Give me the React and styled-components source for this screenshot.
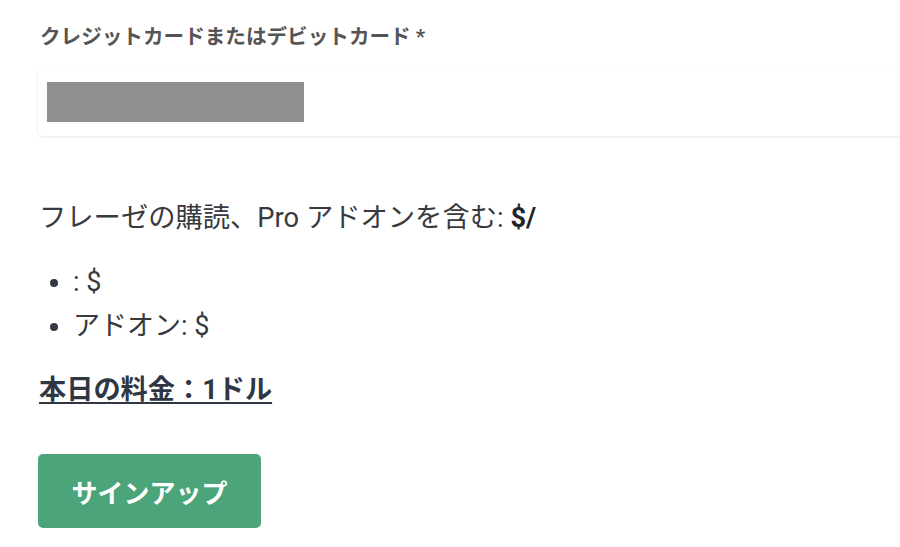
import styled, { createGlobalStyle } from "styled-components";

const GlobalStyle = createGlobalStyle`
  html, body {
    margin: 0;
    padding: 0;
    background: #ffffff;
  }
  body {
    font-family: Roboto, "Noto Sans CJK JP", sans-serif;
    color: #3a3a3a;
  }
`;

const Page = styled.div`
  padding: 23px 0 0 38px;
  overflow: hidden;
`;

const Label = styled.div`
  font-size: 20.6px;
  font-weight: 700;
  line-height: 28px;
  color: #555555;
  padding-left: 2px;
`;

const CardInput = styled.div`
  margin-top: 17px;
  height: 68px;
  width: 900px;
  box-sizing: border-box;
  padding: 14px 9px;
  background: #ffffff;
  border-radius: 5px;
  box-shadow: 0 1px 3px rgba(0, 0, 0, 0.09), 0 0 1px rgba(0, 0, 0, 0.05);
`;

const Redacted = styled.div`
  width: 257px;
  height: 40px;
  background: #909090;
`;

const Summary = styled.p`
  margin: 62px 0 0;
  padding-left: 1px;
  font-size: 27.3px;
  line-height: 40px;
  color: #383a3e;

  strong {
    color: #22252a;
  }
`;

const Items = styled.ul`
  margin: 22px 0 0;
  padding-left: 35px;
  font-size: 27px;
  line-height: 44px;
  color: #383a3e;

  li::marker {
    color: #333a44;
  }
`;

const Total = styled.div`
  margin-top: 22px;
  padding-left: 1px;
  font-size: 27.2px;
  line-height: 40px;
  font-weight: 700;
  color: #2f3745;
  text-decoration: underline;
  text-underline-offset: 3px;
  text-decoration-thickness: 2px;
`;

const SignUpButton = styled.button`
  margin-top: 44px;
  width: 223px;
  height: 74px;
  border: none;
  border-radius: 5px;
  background: #4ca57a;
  color: #ffffff;
  font-family: Roboto, "Noto Sans CJK JP", sans-serif;
  font-size: 26px;
  font-weight: 700;
  cursor: pointer;
`;

export default function App() {
  return (
    <>
      <GlobalStyle />
      <Page>
        <Label>クレジットカードまたはデビットカード *</Label>
        <CardInput>
          <Redacted />
        </CardInput>
        <Summary>
          フレーゼの購読、Pro アドオンを含む: <strong>$/</strong>
        </Summary>
        <Items>
          <li>: $</li>
          <li>アドオン: $</li>
        </Items>
        <Total>本日の料金：1ドル</Total>
        <SignUpButton>サインアップ</SignUpButton>
      </Page>
    </>
  );
}
